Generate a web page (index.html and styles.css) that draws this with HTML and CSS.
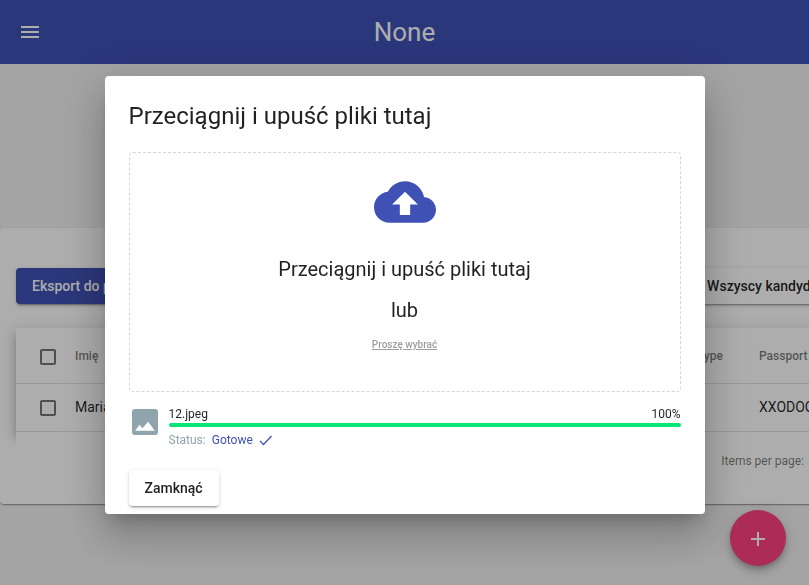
FILE: index.html
```html
<!DOCTYPE html>
<html lang="pl">
<head>
<meta charset="utf-8">
<title>None</title>
<link rel="stylesheet" href="styles.css">
</head>
<body>
<div class="page">
  <header class="topbar">
    <button class="icon-button" type="button" aria-label="Menu">
      <svg viewBox="0 0 24 24" width="24" height="24"><path d="M3 18h18v-2H3v2zm0-5h18v-2H3v2zm0-7v2h18V6H3z"/></svg>
    </button>
    <h1 class="topbar-title">None</h1>
  </header>
  <main class="card">
    <div class="actions">
      <button class="button button-primary" type="button">Eksport do pliku</button>
      <button class="button" type="button">Wszyscy kandydaci</button>
    </div>
    <div class="table-wrap">
      <table class="table">
        <thead>
          <tr>
            <th class="col-check"><input class="check" type="checkbox" aria-label="Zaznacz wszystko"></th>
            <th>Imię</th>
            <th class="col-type">Type</th>
            <th class="col-passport">Passport</th>
          </tr>
        </thead>
        <tbody>
          <tr>
            <td><input class="check" type="checkbox" aria-label="Zaznacz wiersz"></td>
            <td>Maria</td>
            <td></td>
            <td>XXODOO</td>
          </tr>
        </tbody>
      </table>
    </div>
    <div class="paginator">Items per page:</div>
  </main>
  <button class="fab" type="button" aria-label="Dodaj">
    <svg viewBox="0 0 24 24" width="24" height="24"><path d="M19 13h-6v6h-2v-6H5v-2h6V5h2v6h6v2z"/></svg>
  </button>
</div>

<div class="overlay">
  <section class="dialog" role="dialog" aria-modal="true" aria-labelledby="dialog-title">
    <h2 class="dialog-title" id="dialog-title">Przeciągnij i upuść pliki tutaj</h2>
    <div class="dropzone">
      <svg class="cloud" viewBox="0 4 24 16" width="62" height="42"><path d="M19.35 10.04C18.67 6.59 15.64 4 12 4 9.11 4 6.6 5.64 5.35 8.04 2.34 8.36 0 10.91 0 14c0 3.31 2.69 6 6 6h13c2.76 0 5-2.24 5-5 0-2.64-2.05-4.78-4.65-4.96zM14 13v4h-4v-4H7l5-5 5 5h-3z"/></svg>
      <p class="drop-text">Przeciągnij i upuść pliki tutaj</p>
      <p class="drop-text">lub</p>
      <a class="browse" href="#">Proszę wybrać</a>
    </div>
    <div class="file">
      <svg class="file-icon" viewBox="3 3 18 18" width="26" height="26"><path fill-rule="evenodd" d="M21 19V5a2 2 0 0 0-2-2H5a2 2 0 0 0-2 2v14a2 2 0 0 0 2 2h14a2 2 0 0 0 2-2zM5.200 18l3-4.100 2 2.400 4-4.500L18.800 18z"/></svg>
      <div class="file-body">
        <div class="file-head"><span>12.jpeg</span><span>100%</span></div>
        <div class="progress" role="progressbar" aria-valuenow="100" aria-label="12.jpeg"></div>
        <div class="status">
          <span>Status:</span>
          <span class="status-value">Gotowe</span>
          <svg class="status-check" viewBox="0 0 14 14" width="14" height="14"><path d="M1 8l3.500 3.500L12.500 3"/></svg>
        </div>
      </div>
    </div>
    <button class="button" type="button">Zamknąć</button>
  </section>
</div>
</body>
</html>
```
FILE: styles.css
```css
* {
  box-sizing: border-box;
}

body {
  margin: 0;
  font-family: Roboto, "Liberation Sans", sans-serif;
  font-size: 14px;
  color: rgba(0, 0, 0, 0.87);
}

svg {
  display: block;
  fill: currentColor;
}

.page {
  min-height: 100vh;
  overflow: hidden;
  background: #f2f2f2;
}

.topbar {
  display: grid;
  grid-template-columns: 24px 1fr 24px;
  align-items: center;
  height: 64px;
  padding: 0 18px;
  background: #3f51b5;
  color: #fff;
}

.icon-button {
  padding: 0;
  border: 0;
  background: none;
  color: inherit;
}

.topbar-title {
  margin: 0;
  font-size: 26px;
  font-weight: 400;
  text-align: center;
}

.card {
  margin: 164px -52px 0 0;
  padding: 40px 16px 16px;
  border-radius: 4px;
  background: #fff;
  box-shadow: 0 2px 1px -1px rgba(0, 0, 0, 0.2), 0 1px 1px rgba(0, 0, 0, 0.14), 0 1px 3px rgba(0, 0, 0, 0.12);
}

.actions {
  display: flex;
  justify-content: space-between;
  margin-bottom: 24px;
}

.button {
  height: 36px;
  padding: 0 16px;
  border: 0;
  border-radius: 4px;
  background: #fff;
  color: rgba(0, 0, 0, 0.87);
  font: 500 14px/36px Roboto, "Liberation Sans", sans-serif;
  box-shadow: 0 3px 1px -2px rgba(0, 0, 0, 0.2), 0 2px 2px rgba(0, 0, 0, 0.14), 0 1px 5px rgba(0, 0, 0, 0.12);
}

.button-primary {
  background: #3f51b5;
  color: #fff;
}

.table-wrap {
  box-shadow: 0 5px 5px -3px rgba(0, 0, 0, 0.2), 0 8px 10px 1px rgba(0, 0, 0, 0.14), 0 3px 14px 2px rgba(0, 0, 0, 0.12);
}

.table {
  width: 100%;
  table-layout: fixed;
  border-collapse: separate;
  border-spacing: 0;
  background: #fff;
}

.table th,
.table td {
  height: 48px;
  padding: 0 0 2px;
  border-bottom: 1px solid rgba(0, 0, 0, 0.12);
  text-align: left;
}

.table th {
  height: 56px;
  padding: 0;
  color: rgba(0, 0, 0, 0.54);
  font-size: 12px;
  font-weight: 500;
}

.table .col-check {
  width: 59px;
}

.col-type {
  width: 62px;
}

.col-passport {
  width: 86px;
}

.check {
  display: block;
  appearance: none;
  width: 16px;
  height: 16px;
  margin: 2px 0 0 24px;
  border: 2px solid rgba(0, 0, 0, 0.54);
  border-radius: 2px;
}

.paginator {
  position: relative;
  display: flex;
  align-items: center;
  justify-content: flex-end;
  height: 56px;
  padding: 2px 41px 0 0;
  background: #fff;
  color: rgba(0, 0, 0, 0.54);
  font-size: 12px;
}

.fab {
  position: fixed;
  right: 23px;
  bottom: 19px;
  display: grid;
  place-items: center;
  width: 56px;
  height: 56px;
  padding: 2px 0 0;
  border: 0;
  border-radius: 50%;
  background: #ff4081;
  color: #fff;
  box-shadow: 0 3px 5px -1px rgba(0, 0, 0, 0.2), 0 6px 10px rgba(0, 0, 0, 0.14), 0 1px 18px rgba(0, 0, 0, 0.12);
}

.overlay {
  position: fixed;
  inset: 0;
  display: flex;
  align-items: flex-start;
  justify-content: center;
  padding-top: 76px;
  background: rgba(0, 0, 0, 0.32);
}

.dialog {
  width: 600px;
  max-width: 80vw;
  padding: 24px 24px 8px;
  border-radius: 4px;
  background: #fff;
  box-shadow: 0 11px 15px -7px rgba(0, 0, 0, 0.2), 0 24px 38px 3px rgba(0, 0, 0, 0.14), 0 9px 46px 8px rgba(0, 0, 0, 0.12);
}

.dialog-title {
  margin: 0 0 20px;
  font-size: 24px;
  font-weight: 400;
  line-height: 32px;
}

.dropzone {
  display: flex;
  flex-direction: column;
  align-items: center;
  height: 240px;
  padding-top: 28px;
  border: 1px dashed #cfd8dc;
  border-radius: 4px;
}

.cloud {
  margin-bottom: 26px;
  color: #3f51b5;
}

.drop-text {
  margin: 0;
  font-size: 20px;
  line-height: 41px;
}

.browse {
  margin-top: 6px;
  color: #9e9e9e;
  font-size: 10px;
  font-weight: 500;
  line-height: 16px;
}

.file {
  display: flex;
  gap: 11px;
  margin: 14px 0 20px;
  padding-left: 3px;
  font-size: 12px;
}

.file-icon {
  margin-top: 3px;
  color: #90a4ae;
}

.file-body {
  flex: 1;
}

.file-head {
  display: flex;
  justify-content: space-between;
  line-height: 16px;
}

.progress {
  height: 4px;
  margin: 1px 0 4px;
  border-radius: 2px;
  background: #00e676;
}

.status {
  display: flex;
  align-items: center;
  gap: 6px;
  height: 19px;
  padding-bottom: 2px;
  color: #90a4ae;
}

.status-value {
  color: #3f51b5;
}

.status-check {
  fill: none;
  stroke: #3f51b5;
  stroke-width: 1.3;
}
```
